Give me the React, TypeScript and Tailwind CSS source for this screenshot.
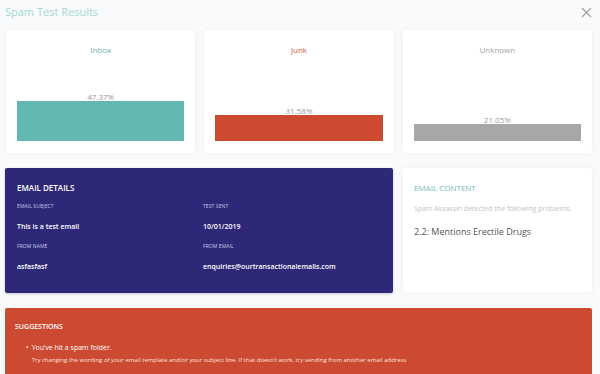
const font = { fontFamily: '"Open Sans", "Liberation Sans", sans-serif' };

type Bucket = { label: string; pct: string; bar: string; text: string; h: string };

const buckets: Bucket[] = [
  { label: "Inbox", pct: "47.37%", bar: "bg-[#62b8b0]", text: "text-[#6fb3ab]", h: "h-[40px]" },
  { label: "Junk", pct: "31.58%", bar: "bg-[#cc4a30]", text: "text-[#d2573d]", h: "h-[26px]" },
  { label: "Unknown", pct: "21.05%", bar: "bg-[#a7a7aa]", text: "text-[#a3a3a6]", h: "h-[17px]" },
];

function BucketCard({ b }: { b: Bucket }) {
  return (
    <div className="flex h-[123px] flex-col rounded-[3px] bg-white px-[11px] pb-[12px] pt-[14px] shadow-[0_0_6px_rgba(0,0,0,0.05)]">
      <div className={`text-center text-[8px] ${b.text}`}>{b.label}</div>
      <div className="flex flex-1 flex-col justify-end">
        <div className="text-center text-[8px] leading-[8px] text-[#9a9a9a]">{b.pct}</div>
        <div className={`${b.h} w-full ${b.bar}`} />
      </div>
    </div>
  );
}

function Field({ label, value }: { label: string; value: string }) {
  return (
    <div>
      <div className="text-[5px] uppercase tracking-[0.1px] text-[#c9c6e6]">{label}</div>
      <div className="mt-[11px] text-[7px] font-semibold text-white">{value}</div>
    </div>
  );
}

export default function App() {
  return (
    <div className="h-[374px] w-[600px] overflow-hidden bg-[#f9fafb]" style={font}>
      <div className="flex items-start justify-between pl-[5px] pr-[8px] pt-[3px]">
        <h1 className="text-[11px] leading-[18px] text-[#a2d9d3]">Spam Test Results</h1>
        <svg width="11" height="11" viewBox="0 0 11 11" className="mt-[4px]" stroke="#a0a0a0" strokeWidth="1.1">
          <path d="M1 1 L10 10 M10 1 L1 10" />
        </svg>
      </div>

      <div className="mt-[9px] grid grid-cols-3 gap-[9px] pl-[6px] pr-[8px]">
        {buckets.map((b) => (
          <BucketCard key={b.label} b={b} />
        ))}
      </div>

      <div className="mt-[15px] grid grid-cols-3 gap-[10px] pl-[5px] pr-[8px]">
        <div className="col-span-2 h-[125px] rounded-[2px] bg-[#2e2878] px-[12px] pt-[14px] shadow-[0_1px_3px_rgba(0,0,0,0.2)]">
          <div className="text-[8px] font-semibold text-white">EMAIL DETAILS</div>
          <div className="mt-[9px] grid grid-cols-[186px_1fr] gap-y-[11px]">
            <Field label="Email Subject" value="This is a test email" />
            <Field label="Test Sent" value="10/01/2019" />
            <Field label="From Name" value="asfasfasf" />
            <Field label="From Email" value="enquiries@ourtransactionalemails.com" />
          </div>
        </div>
        <div className="h-[124px] rounded-[3px] bg-white px-[11px] pt-[14px] shadow-[0_0_6px_rgba(0,0,0,0.05)]">
          <div className="text-[8px] text-[#72c0b3]">EMAIL CONTENT</div>
          <div className="mt-[10px] text-[7px] text-[#c4c4c4]">Spam Assassin detected the following problems.</div>
          <div className="mt-[10px] text-[9px] text-[#555]">2.2: Mentions Erectile Drugs</div>
        </div>
      </div>

      <div className="mx-[5px] mr-[8px] mt-[15px] h-[80px] rounded-[2px] bg-[#cc4a32] px-[10px] pt-[14px] text-white">
        <div className="text-[7px] font-semibold">SUGGESTIONS</div>
        <div className="mt-[9px] flex gap-[3px] pl-[11px]">
          <span className="text-[7px] leading-[11px]">•</span>
          <div>
            <div className="text-[7px] leading-[11px]">You’ve hit a spam folder.</div>
            <div className="mt-[2px] text-[6px] leading-[10px] text-[#fbe3dc]">
              Try changing the wording of your email template and/or your subject line. If that doesn’t work, try sending from another email address
            </div>
          </div>
        </div>
      </div>
    </div>
  );
}
